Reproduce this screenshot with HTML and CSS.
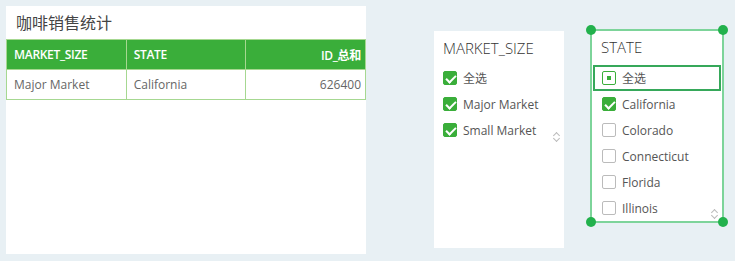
FILE: index.html
```html
<!DOCTYPE html>
<html lang="en">
<head>
    <meta charset="UTF-8">
    <title>咖啡销售统计</title>
    <link rel="stylesheet" href="styles.css">
</head>
<body>
    <div class="board">
        <!-- Table widget -->
        <div class="table-card">
            <div class="card-title">咖啡销售统计</div>
            <table class="data-table">
                <thead>
                    <tr>
                        <th>MARKET_SIZE</th>
                        <th>STATE</th>
                        <th class="num">ID_总和</th>
                    </tr>
                </thead>
                <tbody>
                    <tr>
                        <td>Major Market</td>
                        <td>California</td>
                        <td class="num">626400</td>
                    </tr>
                </tbody>
            </table>
        </div>

        <!-- MARKET_SIZE filter -->
        <div class="filter market">
            <div class="filter-title">MARKET_SIZE</div>
            <ul class="filter-list">
                <li><span class="box checked"></span>全选</li>
                <li><span class="box checked"></span>Major Market</li>
                <li><span class="box checked"></span>Small Market</li>
            </ul>
            <span class="scroll-arrows"></span>
        </div>

        <!-- STATE filter (selected) -->
        <div class="filter state selected">
            <div class="filter-title">STATE</div>
            <ul class="filter-list">
                <li class="focus"><span class="box partial"></span>全选</li>
                <li><span class="box checked"></span>California</li>
                <li><span class="box"></span>Colorado</li>
                <li><span class="box"></span>Connecticut</li>
                <li><span class="box"></span>Florida</li>
                <li><span class="box"></span>Illinois</li>
            </ul>
            <span class="scroll-arrows"></span>
            <span class="handle tl"></span>
            <span class="handle tr"></span>
            <span class="handle bl"></span>
            <span class="handle br"></span>
        </div>
    </div>
</body>
</html>
```

FILE: styles.css
```css
:root {
    --green: #3aae3a;
    --light-green: #a6d891;
    --select-green: #7dd49a;
    --bg: #e8f0f4;
    --text: #333333;
    --muted: #666666;
}

* {
    margin: 0;
    padding: 0;
    box-sizing: border-box;
}

body {
    background-color: var(--bg);
    font-family: 'Open Sans', 'Noto Sans CJK SC', sans-serif;
    color: var(--text);
}

.board {
    display: flex;
    align-items: flex-start;
    padding: 6px;
}

/* Table widget */
.table-card {
    width: 360px;
    height: 248px;
    background-color: #ffffff;
}

.card-title {
    height: 33px;
    padding: 4px 0 0 10px;
    font-size: 16px;
    line-height: 24px;
    color: #444;
    font-family: 'Noto Sans CJK SC', sans-serif;
}

.data-table {
    width: 360px;
    border-collapse: collapse;
    table-layout: fixed;
    font-size: 12px;
}

.data-table th,
.data-table td {
    height: 30px;
    padding: 0 7px;
    text-align: left;
    border: 1px solid var(--light-green);
    white-space: nowrap;
}

.data-table th {
    background-color: var(--green);
    color: #ffffff;
    font-weight: 600;
    letter-spacing: -0.3px;
}

.data-table td {
    color: var(--muted);
}

.data-table .num {
    text-align: right;
    padding-right: 4px;
}

/* Filter widgets */
.filter {
    position: relative;
    background-color: #ffffff;
}

.filter.market {
    width: 130px;
    height: 217px;
    margin: 25px 0 0 68px;
    padding: 6px 0 0 9px;
}

.filter.state {
    width: 134px;
    height: 194px;
    margin: 23px 0 0 26px;
    padding: 5px 0 0 1px;
    border: 2px solid var(--select-green);
}

.filter-title {
    font-size: 15px;
    line-height: 22px;
    font-weight: 300;
    color: var(--text);
    margin-bottom: 6px;
}

.filter.state .filter-title {
    padding-left: 8px;
    margin-bottom: 7px;
}

.filter-list {
    list-style: none;
}

.filter-list li {
    display: flex;
    align-items: center;
    gap: 6px;
    height: 26px;
    font-size: 12px;
    color: #555;
}

.filter.state .filter-list li {
    padding-left: 9px;
    margin-right: 1px;
}

.filter.state .filter-list li.focus {
    border: 2px solid #36a85a;
    padding-left: 7px;
}

.box {
    position: relative;
    flex: none;
    width: 14px;
    height: 14px;
    border: 1px solid #bbbbbb;
    border-radius: 2px;
    background-color: #ffffff;
}

.box.checked {
    border-color: var(--green);
    background-color: var(--green);
}

.box.checked::after {
    content: "";
    position: absolute;
    left: 4px;
    top: 1px;
    width: 4px;
    height: 8px;
    border: solid #ffffff;
    border-width: 0 2px 2px 0;
    transform: rotate(45deg);
}

.box.partial {
    border-color: var(--green);
}

.box.partial::after {
    content: "";
    position: absolute;
    left: 4px;
    top: 4px;
    width: 4px;
    height: 4px;
    background-color: var(--green);
}

/* little up/down chevrons of the scroll box */
.scroll-arrows {
    position: absolute;
    width: 8px;
    height: 10px;
}

.scroll-arrows::before,
.scroll-arrows::after {
    content: "";
    position: absolute;
    left: 1px;
    width: 4px;
    height: 4px;
    border: solid #bbbbbb;
    border-width: 1px 0 0 1px;
}

.scroll-arrows::before {
    top: 1px;
    transform: rotate(45deg);
}

.scroll-arrows::after {
    bottom: 1px;
    transform: rotate(-135deg);
}

.filter.market .scroll-arrows {
    right: 3px;
    top: 101px;
}

.filter.state .scroll-arrows {
    right: 3px;
    bottom: 2px;
}

/* resize handles */
.handle {
    position: absolute;
    width: 10px;
    height: 10px;
    border-radius: 50%;
    background-color: #22b14c;
}

.handle.tl { left: -6px; top: -6px; }
.handle.tr { right: -6px; top: -6px; }
.handle.bl { left: -6px; bottom: -6px; }
.handle.br { right: -6px; bottom: -6px; }
```
